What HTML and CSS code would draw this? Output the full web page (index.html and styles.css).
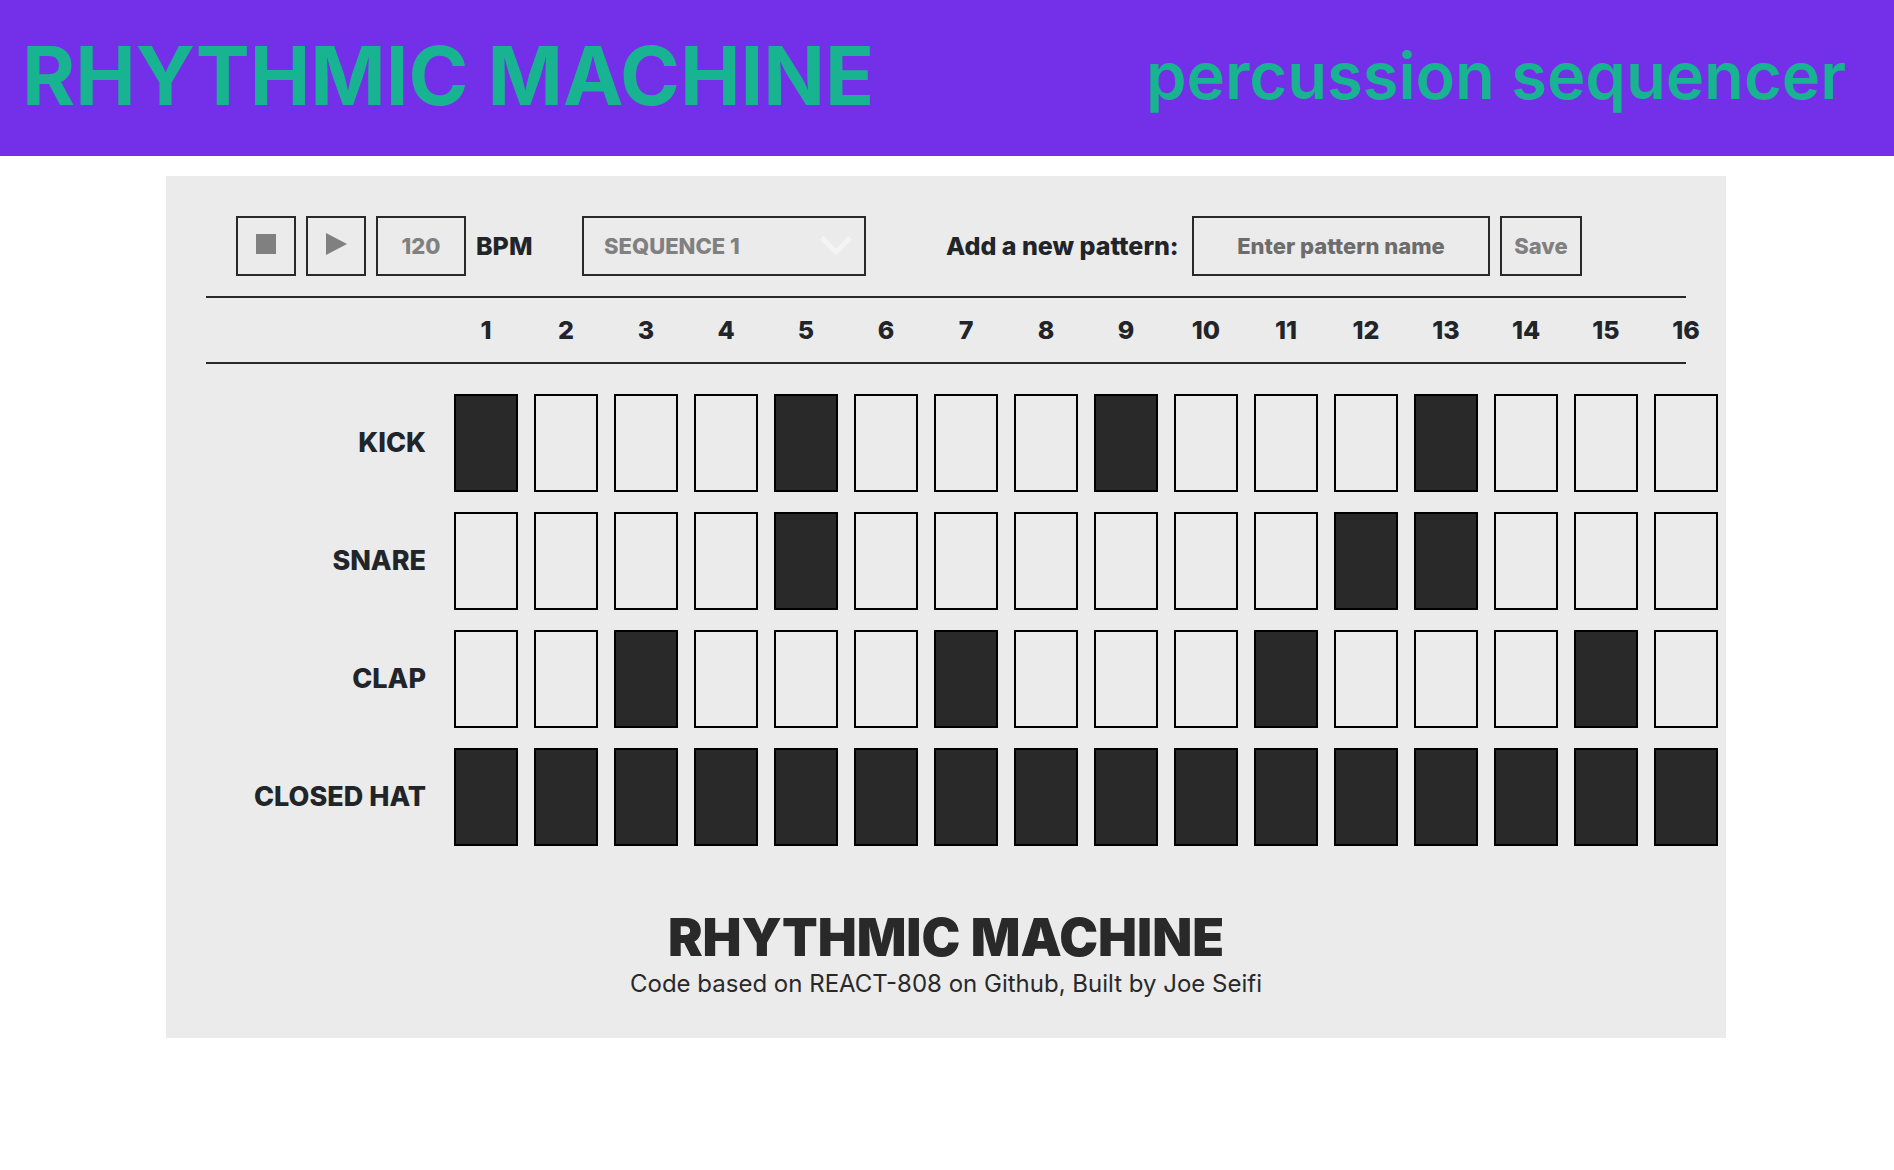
FILE: index.html
```
<!DOCTYPE html>
<html lang="en">
<head>
<meta charset="utf-8">
<title>Rhythmic Machine</title>
<link rel="stylesheet" href="styles.css">
</head>
<body>
<header class="banner">
  <h1 class="banner-title">RHYTHMIC MACHINE</h1>
  <p class="banner-subtitle">percussion sequencer</p>
</header>
<main class="stage">
  <section class="machine">
    <div class="toolbar">
      <div class="transport">
        <button class="control icon-button" type="button" aria-label="Stop"><svg width="22" height="22" viewBox="0 0 22 22"><path d="M1 1h20v20H1z"/></svg></button>
        <button class="control icon-button" type="button" aria-label="Play"><svg width="22" height="22" viewBox="0 0 22 22"><path d="M1 0l21 11L1 22z"/></svg></button>
        <input class="control bpm" id="bpm" type="text" inputmode="numeric" value="120">
        <label class="label" for="bpm">BPM</label>
      </div>
      <div class="select-wrap">
        <select class="control sequence" aria-label="Sequence"><option>SEQUENCE 1</option></select>
        <svg class="chevron" width="32" height="20" viewBox="0 0 32 20"><path d="M1.500 1.500l14.500 14.500L30.500 1.500"/></svg>
      </div>
      <form class="pattern">
        <label class="label pattern-label" for="pattern-name">Add a new pattern:</label>
        <input class="control pattern-name" id="pattern-name" type="text" placeholder="Enter pattern name">
        <button class="control save" type="button">Save</button>
      </form>
    </div>
    <div class="ruler">
      <div class="lane">
        <span class="lane-name"></span>
        <span class="beat">1</span><span class="beat">2</span><span class="beat">3</span><span class="beat">4</span>
        <span class="beat">5</span><span class="beat">6</span><span class="beat">7</span><span class="beat">8</span>
        <span class="beat">9</span><span class="beat">10</span><span class="beat">11</span><span class="beat">12</span>
        <span class="beat">13</span><span class="beat">14</span><span class="beat">15</span><span class="beat">16</span>
      </div>
    </div>
    <div class="tracks" id="tracks"></div>
    <footer class="credits">
      <h2 class="credits-title">RHYTHMIC MACHINE</h2>
      <p class="credits-text">Code based on REACT-808 on Github, Built by Joe Seifi</p>
    </footer>
  </section>
</main>
<script src="script.js"></script>
</body>
</html>
```
FILE: styles.css
```
* { box-sizing: border-box; }
body {
  margin: 0;
  background: #fff;
  color: #212529;
  font-family: Inter, "Liberation Sans", sans-serif;
}
h1, h2, p { margin: 0; }

.banner {
  display: flex;
  align-items: center;
  justify-content: space-between;
  min-height: 156px;
  padding: 0 48px 4px 22px;
  background: #7430e8;
  color: #18b491;
}
.banner-title { font-size: 81px; font-weight: 700; line-height: 100px; }
.banner-subtitle { font-size: 65px; font-weight: 600; line-height: 84px; }

.stage { padding: 20px 2px 20px 0; }
.machine {
  max-width: 1560px;
  margin: 0 auto;
  padding: 40px;
  background: #ebebeb;
}

.toolbar { display: flex; padding: 0 30px 20px; }
.control {
  height: 60px;
  margin: 0;
  padding: 0;
  border: 2px solid #292929;
  border-radius: 0;
  background: transparent;
  color: #808080;
  font: 800 22px/24px Inter, "Liberation Sans", sans-serif;
  text-align: center;
  appearance: none;
}
.label { font-size: 25px; font-weight: 800; line-height: 30px; }
.transport { display: flex; align-items: center; gap: 10px; width: 346px; }
.icon-button {
  display: flex;
  align-items: center;
  justify-content: center;
  width: 60px;
  padding-bottom: 4px;
}
.icon-button svg { fill: #808080; }
.bpm { width: 90px; }
.select-wrap { position: relative; width: 284px; }
.sequence { width: 100%; padding: 0 20px; text-align: left; }
.chevron {
  position: absolute;
  top: 20px;
  right: 14px;
  fill: none;
  stroke: #f4f4f4;
  stroke-width: 5;
  pointer-events: none;
}
.pattern { display: flex; align-items: center; gap: 10px; margin-left: 80px; }
.pattern-label { width: 236px; white-space: nowrap; }
.pattern-name { width: 298px; }
.pattern-name::placeholder { color: #6c6c6c; opacity: 1; }
.save { width: 82px; }

.ruler { border: solid #292929; border-width: 2px 0; }
.lane { display: flex; align-items: center; gap: 16px; }
.lane-name {
  flex: none;
  width: 232px;
  padding-right: 12px;
  font-size: 27px;
  font-weight: 800;
  line-height: 32px;
  text-align: right;
}
.beat {
  flex: none;
  width: 64px;
  font-size: 25px;
  font-weight: 800;
  line-height: 64px;
  text-align: center;
}
.tracks { display: grid; gap: 20px; padding: 30px 0 60px; }
.step {
  flex: none;
  width: 64px;
  height: 98px;
  margin: 0;
  border: 2px solid #000;
  border-radius: 0;
  appearance: none;
}
.step:checked { background: #292929; }

.credits { color: #292929; text-align: center; }
.credits-title { font-size: 52px; font-weight: 900; line-height: 64px; }
.credits-text { font-size: 24px; line-height: 28px; }
```
FILE: script.js
```
const tracks = [
  ["KICK", [1, 5, 9, 13]],
  ["SNARE", [5, 12, 13]],
  ["CLAP", [3, 7, 11, 15]],
  ["CLOSED HAT", [1, 2, 3, 4, 5, 6, 7, 8, 9, 10, 11, 12, 13, 14, 15, 16]],
];
const container = document.getElementById("tracks");
for (const [name, active] of tracks) {
  const lane = document.createElement("div");
  lane.className = "lane";
  const label = document.createElement("span");
  label.className = "lane-name";
  label.textContent = name;
  lane.append(label);
  for (let beat = 1; beat <= 16; beat++) {
    const step = document.createElement("input");
    step.type = "checkbox";
    step.className = "step";
    step.checked = active.includes(beat);
    step.setAttribute("aria-label", `${name} step ${beat}`);
    lane.append(step);
  }
  container.append(lane);
}
```
